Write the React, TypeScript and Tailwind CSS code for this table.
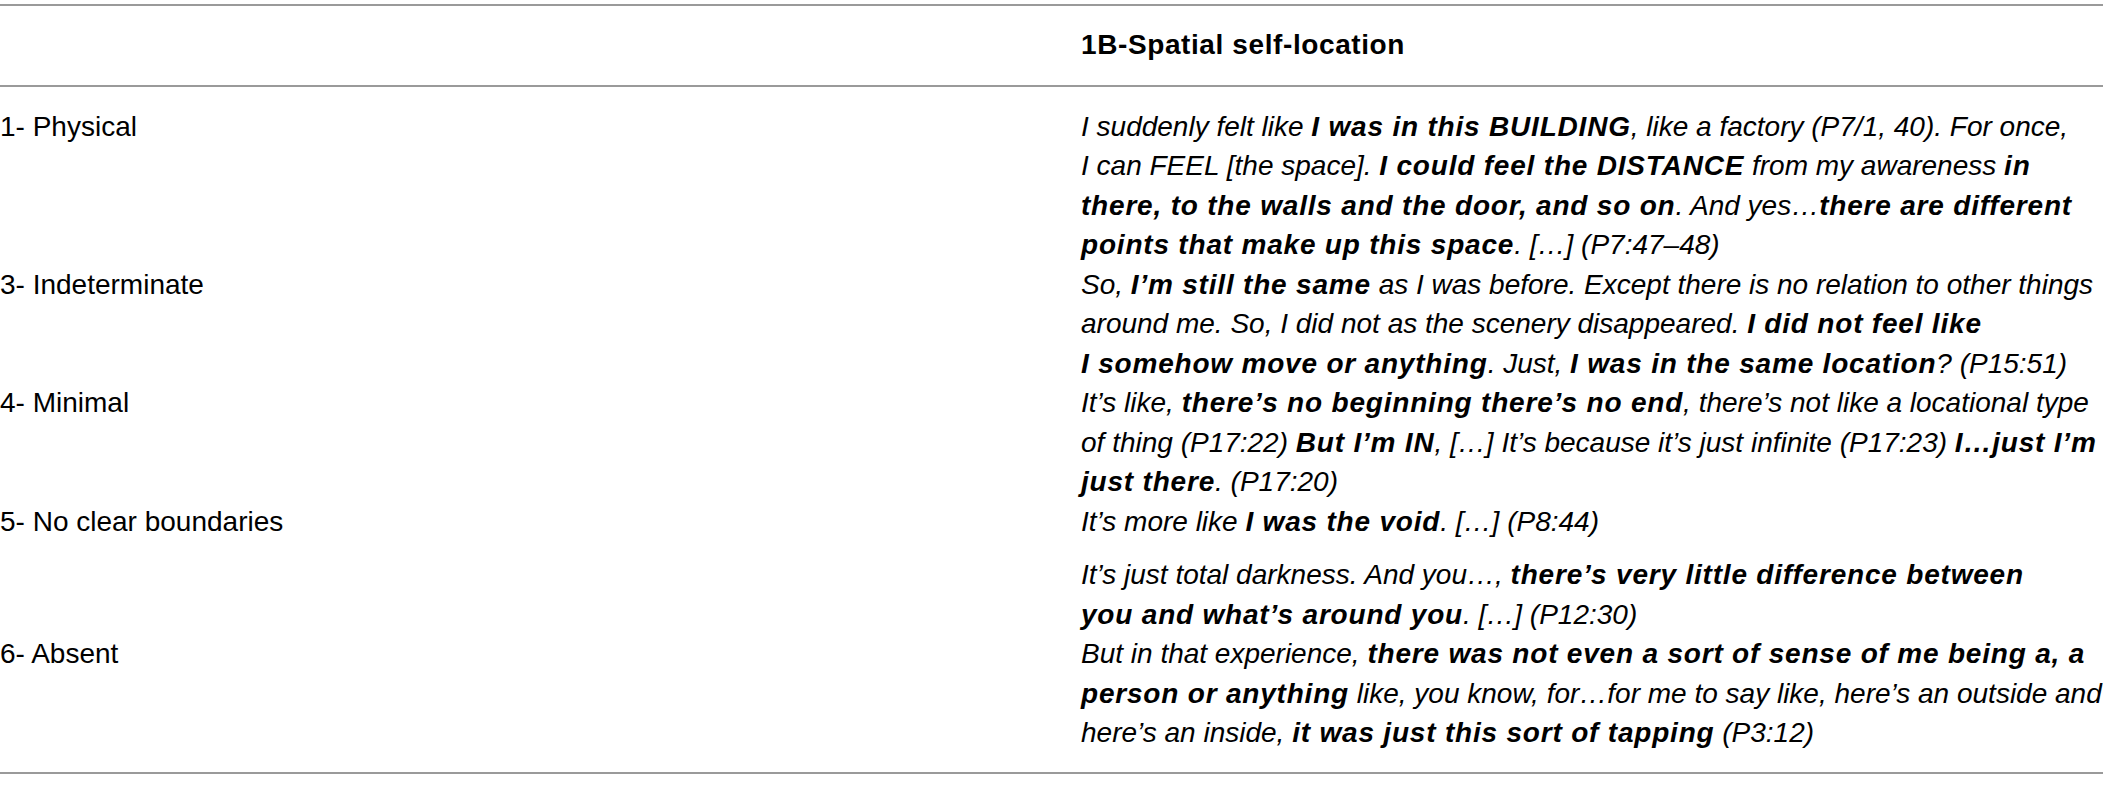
import React from "react";

type Seg = [string, boolean?];

const rows: { label: string; paras: Seg[][][] }[] = [
  {
    label: "1- Physical",
    paras: [
      [
        [["I suddenly felt like "], ["I was in this BUILDING", true], [", like a factory (P7/1, 40). For once,"]],
        [["I can FEEL [the space]. "], ["I could feel the DISTANCE", true], [" from my awareness "], ["in", true]],
        [["there, to the walls and the door, and so on", true], [". And yes…"], ["there are different", true]],
        [["points that make up this space", true], [". […] (P7:47–48)"]],
      ],
    ],
  },
  {
    label: "3- Indeterminate",
    paras: [
      [
        [["So, "], ["I’m still the same", true], [" as I was before. Except there is no relation to other things"]],
        [["around me. So, I did not as the scenery disappeared. "], ["I did not feel like", true]],
        [["I somehow move or anything", true], [". Just, "], ["I was in the same location", true], ["? (P15:51)"]],
      ],
    ],
  },
  {
    label: "4- Minimal",
    paras: [
      [
        [["It’s like, "], ["there’s no beginning there’s no end", true], [", there’s not like a locational type"]],
        [["of thing (P17:22) "], ["But I’m IN", true], [", […] It’s because it’s just infinite (P17:23) "], ["I…just I’m", true]],
        [["just there", true], [". (P17:20)"]],
      ],
    ],
  },
  {
    label: "5- No clear boundaries",
    paras: [
      [[["It’s more like "], ["I was the void", true], [". […] (P8:44)"]]],
      [
        [["It’s just total darkness. And you…, "], ["there’s very little difference between", true]],
        [["you and what’s around you", true], [". […] (P12:30)"]],
      ],
    ],
  },
  {
    label: "6- Absent",
    paras: [
      [
        [["But in that experience, "], ["there was not even a sort of sense of me being a, a", true]],
        [["person or anything", true], [" like, you know, for…for me to say like, here’s an outside and"]],
        [["here’s an inside, "], ["it was just this sort of tapping", true], [" (P3:12)"]],
      ],
    ],
  },
];

export default function App() {
  return (
    <div className="w-[2103px] h-[791px] overflow-hidden bg-white pt-[4px] font-['Liberation_Sans',Arial,sans-serif] text-[28px] leading-[39.5px] text-black">
      <div className="grid grid-cols-[1081px_1fr] border-y-2 border-[#9a9a9a] pt-[19px] pb-[20px]">
        <div />
        <div className="font-bold tracking-[0.6px] whitespace-nowrap">1B-Spatial self-location</div>
      </div>
      <div className="grid grid-cols-[1081px_1fr] border-b-2 border-[#9a9a9a] pt-[20px] pb-[19px]">
        {rows.map((r) => (
          <React.Fragment key={r.label}>
            <div className="whitespace-nowrap">{r.label}</div>
            <div className="italic whitespace-nowrap">
              {r.paras.map((p, pi) => (
                <div key={pi} className={pi > 0 ? "mt-[14px]" : ""}>
                  {p.map((line, li) => (
                    <div key={li}>
                      {line.map((s, si) =>
                        s[1] ? (
                          <span key={si} className="font-bold tracking-[0.8px]">
                            {s[0]}
                          </span>
                        ) : (
                          <span key={si}>{s[0]}</span>
                        )
                      )}
                    </div>
                  ))}
                </div>
              ))}
            </div>
          </React.Fragment>
        ))}
      </div>
    </div>
  );
}
